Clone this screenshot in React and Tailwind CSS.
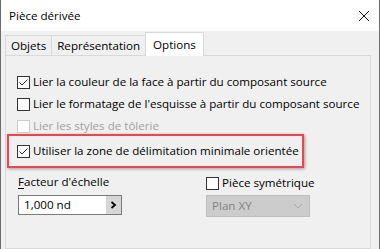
import React from 'react'

function Check({ checked, disabled }) {
  return (
    <span
      className={`inline-flex h-[13px] w-[13px] shrink-0 items-center justify-center border bg-white ${
        disabled ? 'border-[#cccccc]' : 'border-[#333333]'
      }`}
    >
      {checked && (
        <svg width="11" height="11" viewBox="0 0 11 11">
          <path d="M1.5 5.5 L4 8 L9.5 2.5" fill="none" stroke="#333333" strokeWidth="1" />
        </svg>
      )}
    </span>
  )
}

function Row({ label, checked, disabled }) {
  return (
    <div className="flex h-[22px] items-center gap-[3px] whitespace-nowrap">
      <Check checked={checked} disabled={disabled} />
      <span className={disabled ? 'text-[#a0a0a0]' : 'text-black'}>{label}</span>
    </div>
  )
}

export default function App() {
  const font = { fontFamily: '"Open Sans", "Noto Sans", sans-serif' }
  return (
    <div
      className="flex h-[249px] w-[380px] flex-col overflow-hidden border-x border-[#6d6d6d] bg-[#f0f0f0] text-[11.6px] leading-none text-black"
      style={font}
    >
      {/* title bar */}
      <div className="flex h-[31px] shrink-0 items-center justify-between bg-white pl-[8px] pr-[9px]">
        <span>Pièce dérivée</span>
        <svg width="12" height="12" viewBox="0 0 12 12">
          <path d="M1 1 L11 11 M11 1 L1 11" stroke="#111" strokeWidth="1" />
        </svg>
      </div>

      {/* tabs */}
      <div className="flex h-[24px] shrink-0 items-end pl-[4px]">
        <div className="flex h-[20px] items-center border border-b-0 border-[#d9d9d9] px-[5px]">Objets</div>
        <div className="flex h-[20px] items-center border border-b-0 border-l-0 border-[#d9d9d9] px-[5px]">Représentation</div>
        <div className="relative top-[1px] -ml-[1px] flex h-[24px] items-center border border-b-0 border-[#d9d9d9] bg-white px-[7px]">
          Options
        </div>
      </div>

      {/* panel */}
      <div className="ml-[4px] mr-[8px] flex-1 border border-[#d9d9d9] bg-[#f0f0f0] px-[11px] pt-[15px]">
        <Row label="Lier la couleur de la face à partir du composant source" checked />
        <Row label="Lier le formatage de l'esquisse à partir du composant source" />
        <Row label="Lier les styles de tôlerie" disabled />

        <div className="-ml-[10px] -mt-[3px] w-[297px] border-[2.5px] border-[#ec4550] py-[5px] pl-[8px] shadow-[1px_1px_3px_rgba(0,0,0,0.35)]">
          <div className="flex h-[20px] items-center gap-[3px] whitespace-nowrap">
            <Check checked />
            <span>Utiliser la zone de délimitation minimale orientée</span>
          </div>
        </div>

        <div className="mt-[8px] flex">
          <div className="w-[189px] pl-[1px]">
            <div className="h-[14px]">
              <span className="underline underline-offset-2">F</span>acteur d'échelle
            </div>
            <div className="mt-[5px] flex h-[20px] w-[104px] items-stretch border border-[#7a7a7a] bg-white">
              <span className="flex flex-1 items-center pl-[5px]">1,000 nd</span>
              <span className="flex w-[15px] items-center justify-center bg-[#d6d6d6]">
                <svg width="7" height="8" viewBox="0 0 7 8">
                  <path d="M1.5 1 L5 4 L1.5 7" fill="none" stroke="#000" strokeWidth="1.8" />
                </svg>
              </span>
            </div>
          </div>
          <div>
            <div className="flex h-[14px] items-center gap-[3px]">
              <Check />
              <span>Pièce symétrique</span>
            </div>
            <div className="mt-[5px] flex h-[22px] w-[104px] items-center justify-between border border-[#bfbfbf] bg-[#cccccc] pl-[5px] pr-[6px] text-[#838383]">
              <span>Plan XY</span>
              <svg width="10" height="6" viewBox="0 0 10 6">
                <path d="M1 1 L5 5 L9 1" fill="none" stroke="#a6a6a6" strokeWidth="1" />
              </svg>
            </div>
          </div>
        </div>
      </div>
    </div>
  )
}
